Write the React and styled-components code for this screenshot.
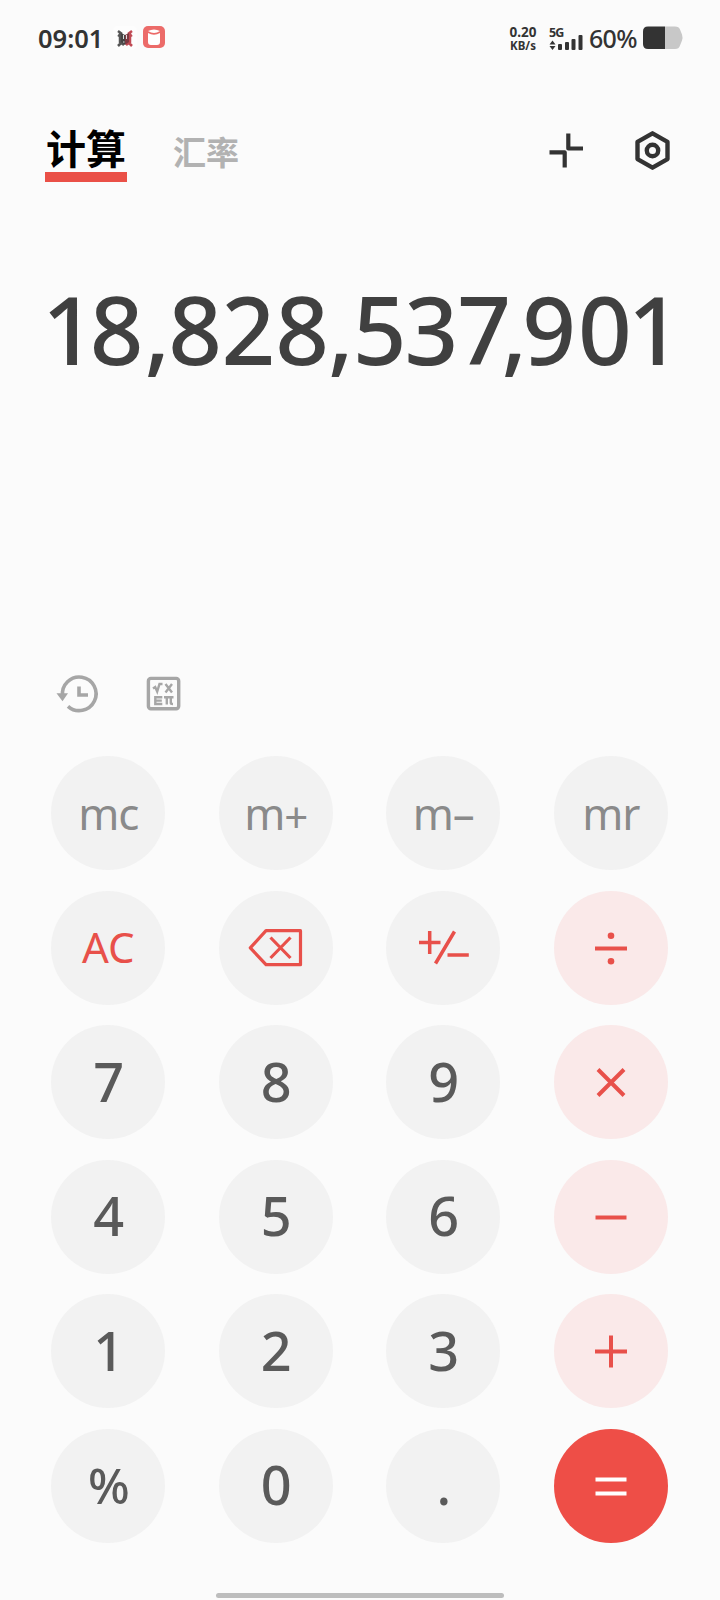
import styled, { createGlobalStyle } from "styled-components"

const GlobalStyle = createGlobalStyle`
    * {
        box-sizing: border-box;
    }
    body {
        margin: 0;
        background: #fbfbfb;
        font-family: "Noto Sans", "Noto Sans CJK SC", sans-serif;
    }
    button {
        border: none;
        padding: 0;
        background: none;
        font-family: inherit;
    }
    svg {
        display: block;
        overflow: visible;
    }
`

const Screen = styled.div`
    width: 720px;
    height: 1600px;
    display: flex;
    flex-direction: column;
    overflow: hidden;
    background: #fbfbfb;
`

const StatusBar = styled.div`
    height: 76px;
    padding: 0 37px 0 38px;
    display: flex;
    justify-content: space-between;
    align-items: center;
    color: #333;
`

const StatusGroup = styled.div`
    display: flex;
    align-items: center;
`

const Clock = styled.span`
    width: 75px;
    padding-bottom: 1px;
    font-size: 25.5px;
    font-weight: 600;
    line-height: 30px;
    white-space: nowrap;
`

const AppIcons = styled.div`
    display: flex;
    gap: 6px;
`

const NetSpeed = styled.div`
    width: 30px;
    margin-right: 11px;
    display: flex;
    flex-direction: column;
    align-items: center;
    font-weight: 700;
    font-size: 13.5px;
    line-height: 15px;
    small {
        font-size: 11.5px;
        line-height: 12px;
    }
`

const Signal = styled.div`
    width: 34px;
    height: 24px;
    margin-right: 6px;
`

const SignalType = styled.span`
    display: block;
    height: 12px;
    font-size: 12.5px;
    font-weight: 700;
    letter-spacing: -0.8px;
    line-height: 14px;
    white-space: nowrap;
`

const SignalLevel = styled.div`
    display: flex;
    align-items: flex-end;
    height: 15px;
    margin-top: -3px;
`

const BatteryText = styled.span`
    width: 54px;
    padding-bottom: 1px;
    font-size: 25px;
    font-weight: 500;
    letter-spacing: -0.7px;
    line-height: 30px;
    white-space: nowrap;
`

const Header = styled.header`
    height: 116px;
    padding: 46px 50px 0 45px;
    display: flex;
    justify-content: space-between;
`

const Tabs = styled.nav`
    display: flex;
    gap: 46px;
`

const Tab = styled.button`
    height: 60px;
    padding-top: ${({ $active }) => ($active ? 0 : 4)}px;
    display: flex;
    flex-direction: column;
    font-family: "Noto Sans CJK SC", sans-serif;
    font-weight: 700;
    font-size: ${({ $active }) => ($active ? 40 : 33)}px;
    line-height: 50px;
    color: ${({ $active }) => ($active ? "#000" : "#b2b2b2")};
    &::after {
        content: "";
        display: ${({ $active }) => ($active ? "block" : "none")};
        width: 82px;
        height: 10px;
        background: #ea5047;
    }
`

const HeaderIcons = styled.div`
    display: flex;
    gap: 50px;
    padding-top: 8px;
`

const Display = styled.div`
    height: 472px;
    padding: 73px 0 0 42px;
    font-size: 94px;
    font-weight: 500;
    line-height: 128px;
    color: #404040;
    white-space: nowrap;
`

const Glyph = styled.span`
    letter-spacing: ${({ $kern }) => $kern}px;
`

const Tools = styled.div`
    height: 92px;
    padding: 10px 0 0 55px;
    display: flex;
    gap: 46px;
`

const Keypad = styled.div`
    padding-left: 51.3px;
    display: grid;
    grid-template-columns: repeat(4, 114px);
    grid-auto-rows: 114px;
    column-gap: 53.5px;
    row-gap: 20.6px;
`

const backgrounds = {
    operator: "#fae9e9",
    equals: "#ee4e47",
}

const Key = styled.button`
    display: flex;
    align-items: center;
    justify-content: center;
    border-radius: 50%;
    background: ${({ $kind }) => backgrounds[$kind] || "#f2f2f2"};
    color: ${({ $kind }) => ($kind === "equals" ? "#fff" : "#e8504a")};
`

const Digit = styled.span`
    padding: 0 0 3px 1px;
    font-size: 54px;
    font-weight: 500;
    line-height: 74px;
    color: #5a5a5a;
`

const Percent = styled(Digit)`
    padding-bottom: 2px;
    font-size: 49px;
`

const Memory = styled.span`
    font-size: 44px;
    font-weight: 400;
    letter-spacing: -1px;
    line-height: 60px;
    color: #8a8a8a;
`

const Sign = styled.span`
    vertical-align: -3px;
    font-size: 42px;
    line-height: 0;
`

const Clear = styled.span`
    padding-bottom: 1px;
    font-size: 42px;
    font-weight: 400;
    line-height: 58px;
`

const HomeBar = styled.div`
    width: 288px;
    height: 5px;
    margin: auto auto 2px;
    border-radius: 3px;
    background: #bdbdbd;
`

const BugIcon = () => (
    <svg width="24" height="24" viewBox="0 0 24 24" fill="none">
        <rect width="24" height="24" rx="5" fill="#fdfdfd" />
        <path d="M5 5l4 3M5 9l3 2M5 20l4-4M7 7v9l4 3" stroke="#555" strokeWidth="2.500" />
        <path d="M19 5l-4 3M19 9l-3 2M19 20l-4-4M17 7v9l-4 3" stroke="#c04a54" strokeWidth="2.500" />
        <path d="M8 7l4 2v10l-4-3z" fill="#444" />
        <path d="M16 7l-4 2v10l4-3z" fill="#7c3a42" />
        <path d="M10.500 9v4M13.500 9v4M10 16h1.500" stroke="#ddd" />
    </svg>
)

const JarIcon = () => (
    <svg width="22" height="22" viewBox="0 0 22 22" fill="none">
        <rect width="22" height="22" rx="5" fill="#ec6b69" />
        <path d="M5 7v9q0 3 3 3h6q3 0 3-3V7q-6 3.500-12 0z" fill="#fff" />
        <path d="M5 5q6-3 12 0q-6 4-12 0z" fill="#fff" />
    </svg>
)

const SignalBars = () => (
    <svg width="34" height="15" viewBox="0 0 34 15" fill="#333">
        <path d="M0.500 9.500l3-4 3 4zM0.500 11l3 4 3-4z" />
        <rect x="9" y="9" width="4" height="6" rx="1" />
        <rect x="16" y="7" width="4" height="8" rx="1" />
        <rect x="22.500" y="4" width="4" height="11" rx="1" />
        <rect x="29.500" y="0" width="4" height="15" rx="1" />
    </svg>
)

const BatteryIcon = () => (
    <svg width="40" height="24" viewBox="0 0 40 24">
        <path d="M22 0.500h10q4 0 5 3l2 5q1 3 0 6l-2 5q-1 3.500-5 3.500H22z" fill="#c8c8c8" />
        <path d="M22 0.500H5q-5 0-5 5v12.500q0 5 5 5h17z" fill="#333" />
    </svg>
)

const CollapseIcon = () => (
    <svg width="36" height="40" viewBox="0 0 36 40" fill="none" stroke="#333" strokeWidth="4.200" strokeLinejoin="round">
        <path d="M20.300 3.500v15H35" />
        <path d="M1.500 22.300h15.200V37.500" />
    </svg>
)

const SettingsIcon = () => (
    <svg width="36" height="42" viewBox="0 0 36 42" fill="none" stroke="#333" strokeWidth="4.400" strokeLinejoin="round">
        <path d="M18.500 3.300l15 8.600v17.200l-15 8.600-15-8.600V11.900z" />
        <circle cx="18.500" cy="20.500" r="5.700" />
    </svg>
)

const HistoryIcon = () => (
    <svg width="44" height="40" viewBox="0 0 44 40" fill="none" stroke="#a6a6a6" strokeWidth="3.600">
        <path d="M13 32.300A16.800 16.800 0 1 0 7.600 22" />
        <path d="M24 12.500V21H33" />
        <path d="M1.500 19.200h11.500l-5.500 8z" fill="#a6a6a6" stroke="none" />
    </svg>
)

const FormulaIcon = () => (
    <svg width="36" height="38" viewBox="0 0 36 38" fill="none" stroke="#a6a6a6" strokeWidth="2.400">
        <rect x="3.400" y="4.400" width="30.300" height="30.300" rx="2.500" strokeWidth="3.400" />
        <path d="M8 14.500l2.200-1.500 2 4.500 2.300-7.500H17.500" />
        <path d="M20.500 10l6.500 8.500M27 10l-6.500 8.500" />
        <path d="M17.300 23.200h-7v6.800h7M10.300 26.600h6.500" />
        <path d="M19 23.200h9.500M21.800 23.500v7M25.800 23.500v5.500q0 1 2.200 1" />
    </svg>
)

const BackspaceIcon = () => (
    <svg width="56" height="40" viewBox="0 0 56 40" fill="none" stroke="currentColor" strokeWidth="3.200" strokeLinejoin="round">
        <path d="M18 2.700H52.500v34H18L2.300 19.800z" />
        <path d="M22.500 9.500l20 20.500M42.500 9.500l-20 20.500" />
    </svg>
)

const PlusMinusIcon = () => (
    <svg width="52" height="36" viewBox="0 0 52 36" fill="none" stroke="currentColor" strokeWidth="3.500">
        <path d="M2 12.500h21.500M12.700 1v23M37.500 1.500l-19 32M30.500 25h21.300" />
    </svg>
)

// arithmetic signs share one 34px box
const signs = {
    divide: "M1 17.500h32",
    times: "M4 4.500l26 26M30 4.500l-26 26",
    minus: "M1.500 17.500h31",
    plus: "M1 17.500h32M17 1.500v32",
    equals: "M1.500 10.500h31M1.500 24.500h31",
}

const SignIcon = ({ name }) => (
    <svg width="34" height="34" viewBox="0 0 34 34" fill="none" stroke="currentColor" strokeWidth="4">
        <path d={signs[name]} />
        {name === "divide" && (
            <g fill="currentColor" stroke="none">
                <circle cx="17" cy="4.800" r="3.300" />
                <circle cx="17" cy="30.200" r="3.300" />
            </g>
        )}
    </svg>
)

// each character with the space added after it
const result = [
    ["1", -6],
    ["8", 1],
    [",", -2],
    ["8", -0.5],
    ["2", 0],
    ["8", -1],
    [",", -1],
    ["5", -2],
    ["3", -1],
    ["7", -9.5],
    [",", -5],
    ["9", 2],
    ["0", -4],
    ["1", 0],
]

const keys = [
    { id: "mc", content: <Memory>mc</Memory> },
    { id: "m+", content: <Memory>m<Sign>+</Sign></Memory> },
    { id: "m-", content: <Memory>m–</Memory> },
    { id: "mr", content: <Memory>mr</Memory> },
    { id: "ac", content: <Clear>AC</Clear> },
    { id: "back", content: <BackspaceIcon /> },
    { id: "negate", content: <PlusMinusIcon /> },
    { id: "divide", kind: "operator", content: <SignIcon name="divide" /> },
    { id: "7", content: <Digit>7</Digit> },
    { id: "8", content: <Digit>8</Digit> },
    { id: "9", content: <Digit>9</Digit> },
    { id: "times", kind: "operator", content: <SignIcon name="times" /> },
    { id: "4", content: <Digit>4</Digit> },
    { id: "5", content: <Digit>5</Digit> },
    { id: "6", content: <Digit>6</Digit> },
    { id: "minus", kind: "operator", content: <SignIcon name="minus" /> },
    { id: "1", content: <Digit>1</Digit> },
    { id: "2", content: <Digit>2</Digit> },
    { id: "3", content: <Digit>3</Digit> },
    { id: "plus", kind: "operator", content: <SignIcon name="plus" /> },
    { id: "percent", content: <Percent>%</Percent> },
    { id: "0", content: <Digit>0</Digit> },
    { id: "dot", content: <Digit>.</Digit> },
    { id: "equals", kind: "equals", content: <SignIcon name="equals" /> },
]

export default function App() {
    return (
        <Screen>
            <GlobalStyle />
            <StatusBar>
                <StatusGroup>
                    <Clock>09:01</Clock>
                    <AppIcons>
                        <BugIcon />
                        <JarIcon />
                    </AppIcons>
                </StatusGroup>
                <StatusGroup>
                    <NetSpeed>
                        0.20
                        <small>KB/s</small>
                    </NetSpeed>
                    <Signal>
                        <SignalType>5G</SignalType>
                        <SignalLevel>
                            <SignalBars />
                        </SignalLevel>
                    </Signal>
                    <BatteryText>60%</BatteryText>
                    <BatteryIcon />
                </StatusGroup>
            </StatusBar>
            <Header>
                <Tabs>
                    <Tab $active>计算</Tab>
                    <Tab>汇率</Tab>
                </Tabs>
                <HeaderIcons>
                    <CollapseIcon />
                    <SettingsIcon />
                </HeaderIcons>
            </Header>
            <Display>
                {result.map(([char, kern], i) => (
                    <Glyph key={i} $kern={kern}>{char}</Glyph>
                ))}
            </Display>
            <Tools>
                <HistoryIcon />
                <FormulaIcon />
            </Tools>
            <Keypad>
                {keys.map(({ id, kind, content }) => (
                    <Key key={id} $kind={kind}>
                        {content}
                    </Key>
                ))}
            </Keypad>
            <HomeBar />
        </Screen>
    )
}
